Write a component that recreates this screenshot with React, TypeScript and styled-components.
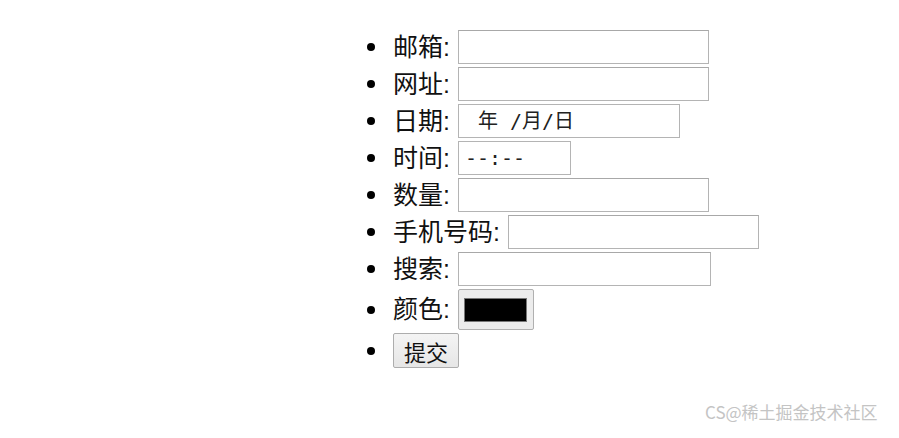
import styled, { createGlobalStyle } from 'styled-components';

const GlobalStyle = createGlobalStyle`
    html, body {
        margin: 0;
        padding: 0;
        background: #ffffff;
    }
    body {
        font-family: "Liberation Sans", "Noto Sans CJK SC", sans-serif;
        color: #111;
    }
`

const Page = styled.div`
    position: relative;
    width: 899px;
    height: 438px;
    overflow: hidden;
`

const FormList = styled.ul`
    list-style: none;
    margin: 0;
    padding: 30px 0 0 367px;
    display: flex;
    flex-direction: column;
    gap: 3px;
`

const Item = styled.li`
    display: flex;
    align-items: center;
    font-size: 25px;
    line-height: 1;

    &::before {
        content: "";
        width: 8px;
        height: 8px;
        border-radius: 50%;
        background: #000;
        margin-right: 18px;
        flex-shrink: 0;
    }
`

const Label = styled.span`
    margin-right: 8px;
    white-space: nowrap;
`

const Field = styled.input<{ $width: number }>`
    box-sizing: border-box;
    width: ${p => p.$width}px;
    height: 34px;
    border: 1px solid #b4b4b4;
    border-top-color: #a8a8a8;
    background: #fff;
    padding: 0 6px;
    font-size: 20px;
    outline: none;
`

const FakeField = styled.div<{ $width: number }>`
    box-sizing: border-box;
    width: ${p => p.$width}px;
    height: 34px;
    border: 1px solid #b4b4b4;
    display: flex;
    align-items: center;
    padding-left: ${p => (p.$width > 150 ? 19 : 6)}px;
    font-family: "DejaVu Sans Mono", "Noto Sans CJK SC", monospace;
    font-size: 20px;
    color: #222;
    white-space: pre;
`

const ColorWell = styled.div`
    box-sizing: border-box;
    width: 76px;
    height: 41px;
    border: 1px solid #b0b0b0;
    border-radius: 2px;
    background: #ececec;
    display: flex;
    align-items: center;
    justify-content: center;
`

const Swatch = styled.div`
    width: 61px;
    height: 22px;
    background: #000;
    border: 1px solid #777;
`

const SubmitButton = styled.button`
    box-sizing: border-box;
    height: 35px;
    width: 66px;
    border: 1px solid #adadad;
    border-radius: 2px;
    background: linear-gradient(#f4f4f4, #e6e6e6);
    font-family: "Liberation Sans", "Noto Sans CJK SC", sans-serif;
    font-size: 22px;
    color: #111;
    padding: 0;
`

const Watermark = styled.div`
    position: absolute;
    left: 705px;
    top: 399px;
    font-family: "Noto Sans CJK SC", sans-serif;
    font-size: 17px;
    color: #c4c4c4;
    white-space: nowrap;
`

export default function App() {
    return (
        <Page>
            <GlobalStyle />
            <form onSubmit={e => e.preventDefault()}>
                <FormList>
                    <Item>
                        <Label>邮箱:</Label>
                        <Field type="email" $width={251} />
                    </Item>
                    <Item>
                        <Label>网址:</Label>
                        <Field type="url" $width={251} />
                    </Item>
                    <Item>
                        <Label>日期:</Label>
                        <FakeField $width={222}>{'年 /月/日'}</FakeField>
                    </Item>
                    <Item>
                        <Label>时间:</Label>
                        <FakeField $width={113}>{'--:--'}</FakeField>
                    </Item>
                    <Item>
                        <Label>数量:</Label>
                        <Field type="number" $width={251} />
                    </Item>
                    <Item>
                        <Label>手机号码:</Label>
                        <Field type="tel" $width={251} />
                    </Item>
                    <Item>
                        <Label>搜索:</Label>
                        <Field type="search" $width={253} />
                    </Item>
                    <Item>
                        <Label>颜色:</Label>
                        <ColorWell>
                            <Swatch />
                        </ColorWell>
                    </Item>
                    <Item>
                        <SubmitButton type="submit">提交</SubmitButton>
                    </Item>
                </FormList>
            </form>
            <Watermark>CS@稀土掘金技术社区</Watermark>
        </Page>
    )
}
